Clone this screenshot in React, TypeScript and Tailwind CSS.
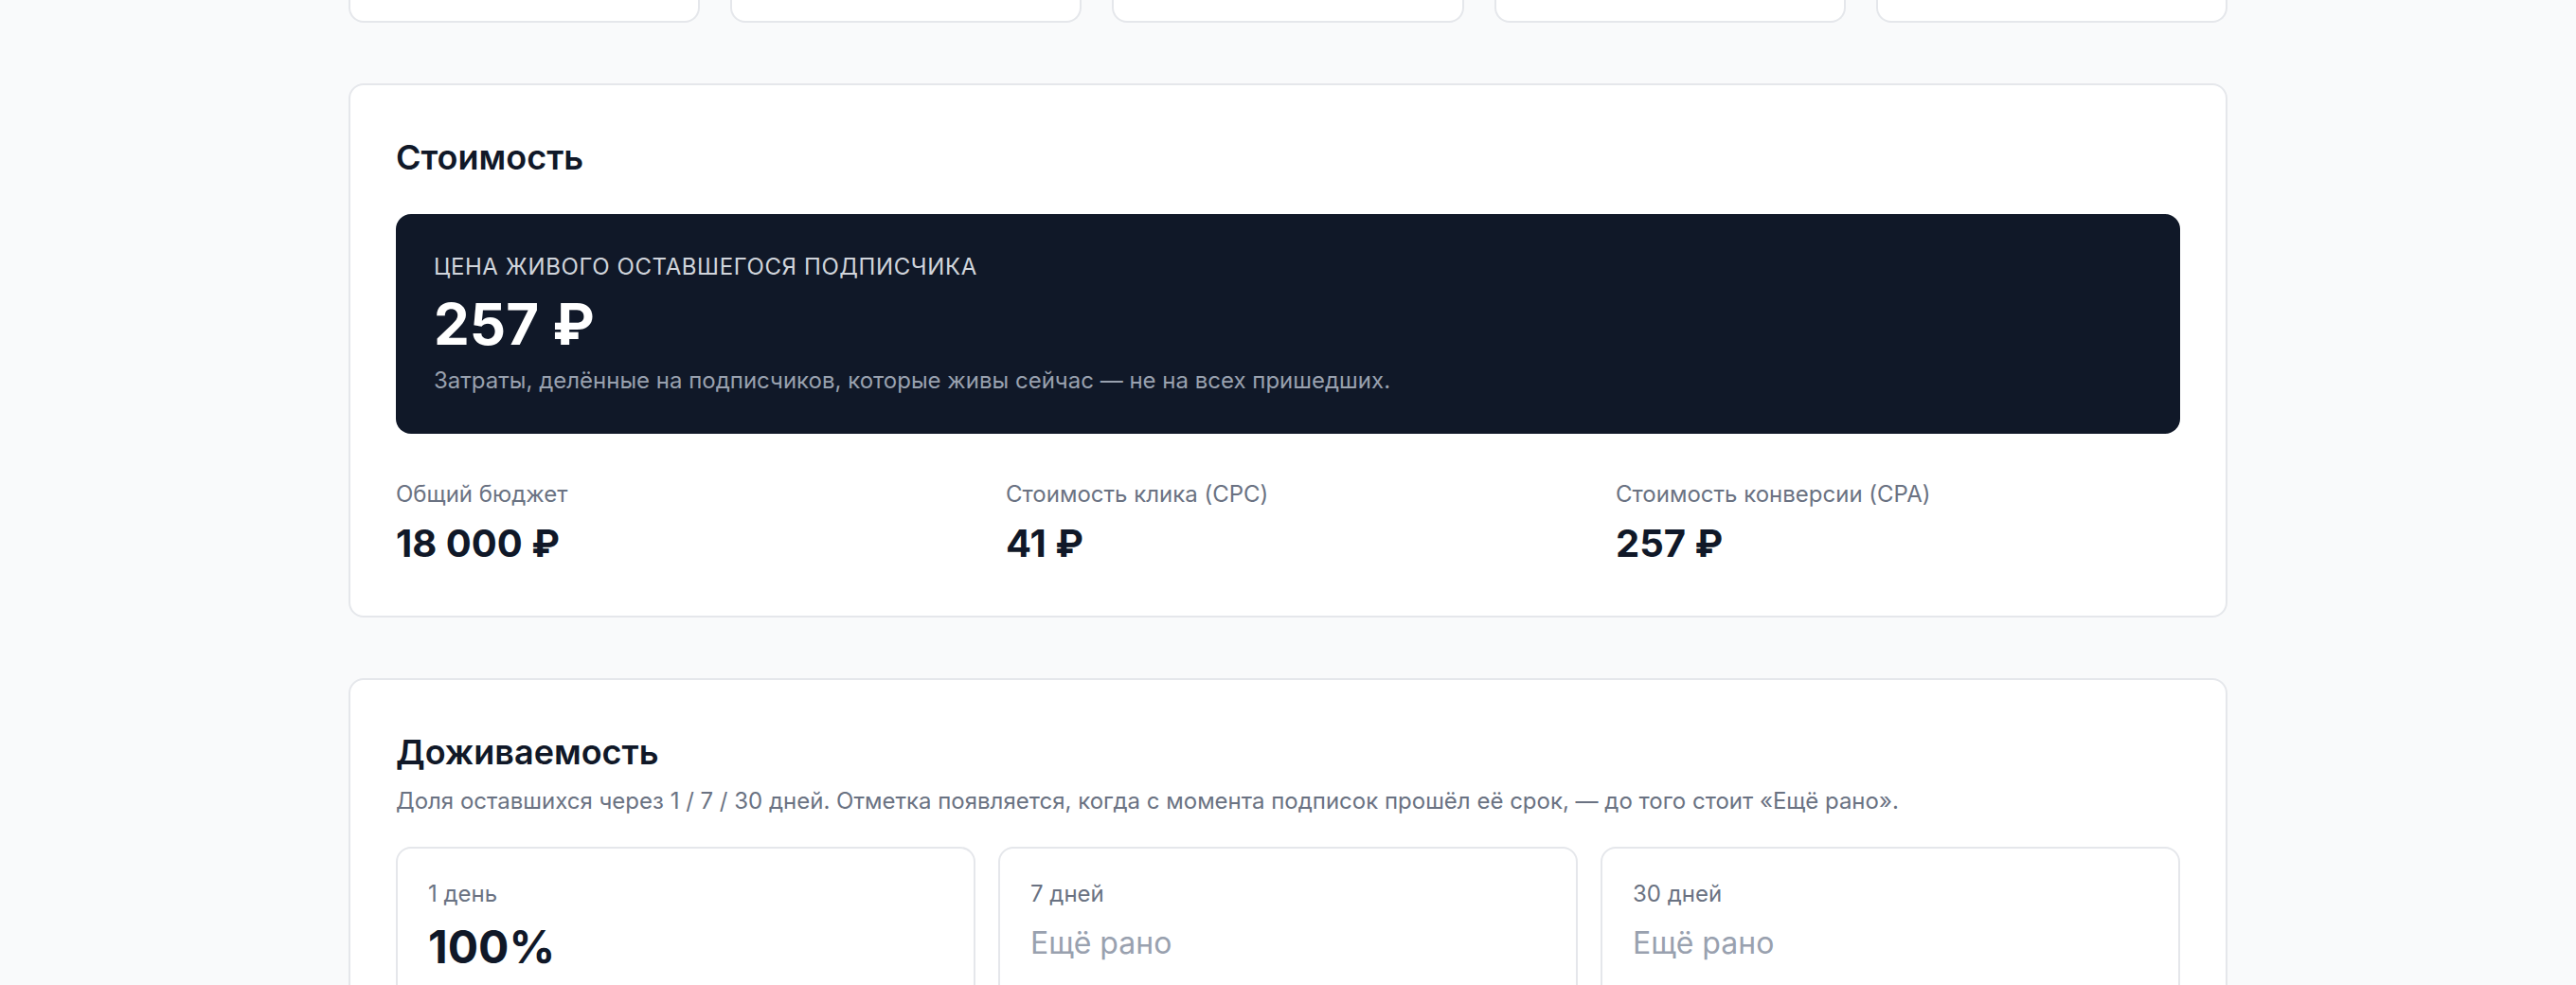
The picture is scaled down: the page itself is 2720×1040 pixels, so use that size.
import React from "react";

const topCards = [0, 1, 2, 3, 4];

const costMetrics = [
  { label: "Общий бюджет", value: "18 000 ₽" },
  { label: "Стоимость клика (CPC)", value: "41 ₽" },
  { label: "Стоимость конверсии (CPA)", value: "257 ₽" },
];

const survival: { label: string; value: string | null }[] = [
  { label: "1 день", value: "100%" },
  { label: "7 дней", value: null },
  { label: "30 дней", value: null },
];

export default function App() {
  return (
    <div className="[zoom:2] min-h-screen bg-gray-50 font-[Inter,'Noto_Sans',sans-serif] text-gray-900 antialiased">
      <div className="mx-auto max-w-5xl px-4 pb-10 space-y-8">
        {/* tail of the stat cards above (page is scrolled) */}
        <div className="grid grid-cols-5 gap-4">
          {topCards.map((i) => (
            <div
              key={i}
              className="h-3 rounded-b-lg border-x border-b border-gray-200 bg-white"
            />
          ))}
        </div>

        {/* Стоимость */}
        <section className="rounded-lg border border-gray-200 bg-white p-6">
          <h2 className="text-lg font-semibold text-gray-900">Стоимость</h2>
          <div className="mt-4 rounded-lg bg-gray-900 p-5">
            <div className="text-xs uppercase tracking-wide text-gray-300">
              Цена живого оставшегося подписчика
            </div>
            <div className="mt-1 text-3xl font-bold text-white">257 ₽</div>
            <div className="mt-1 text-xs text-gray-400">
              Затраты, делённые на подписчиков, которые живы сейчас — не на всех пришедших.
            </div>
          </div>
          <div className="mt-6 grid grid-cols-3 gap-6">
            {costMetrics.map((m) => (
              <div key={m.label}>
                <div className="text-xs text-gray-500">{m.label}</div>
                <div className="mt-1 text-xl font-bold text-gray-900">{m.value}</div>
              </div>
            ))}
          </div>
        </section>

        {/* Доживаемость */}
        <section className="rounded-lg border border-gray-200 bg-white p-6">
          <h2 className="text-lg font-semibold text-gray-900">Доживаемость</h2>
          <p className="mt-1 text-xs text-gray-500">
            Доля оставшихся через 1 / 7 / 30 дней. Отметка появляется, когда с момента подписок прошёл её срок, — до того стоит «Ещё рано».
          </p>
          <div className="mt-4 grid grid-cols-3 gap-3">
            {survival.map((s) => (
              <div key={s.label} className="rounded-lg border border-gray-200 p-4">
                <div className="text-xs text-gray-500">{s.label}</div>
                {s.value ? (
                  <div className="mt-1 text-2xl font-bold text-gray-900">{s.value}</div>
                ) : (
                  <div className="mt-1 text-base leading-7 text-gray-400">Ещё рано</div>
                )}
                <div className="mt-2 text-xs text-gray-400">&nbsp;</div>
              </div>
            ))}
          </div>
        </section>
      </div>
    </div>
  );
}
